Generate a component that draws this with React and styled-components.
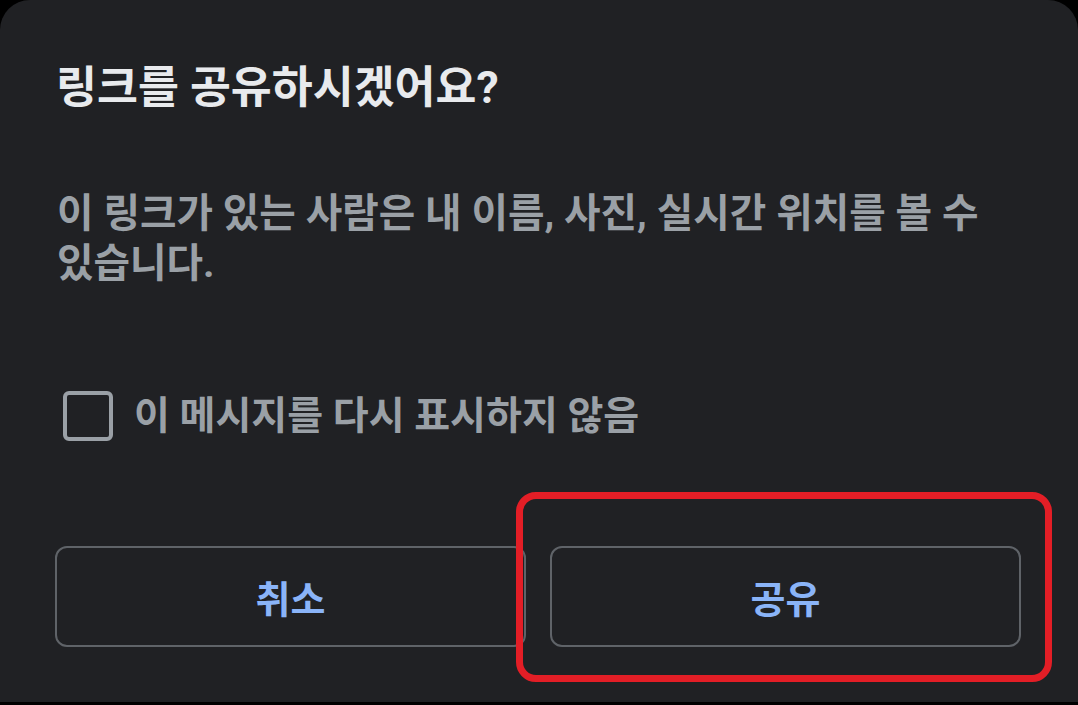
import React, { useState } from 'react';
import styled, { createGlobalStyle } from 'styled-components';

const GlobalStyle = createGlobalStyle`
  html, body {
    margin: 0;
    padding: 0;
    background: #000;
  }
  body {
    font-family: Roboto, "Noto Sans CJK KR", sans-serif;
  }
`;

const Screen = styled.div`
  width: 1078px;
  height: 705px;
  background: #000;
  overflow: hidden;
`;

const Dialog = styled.div`
  box-sizing: border-box;
  width: 1078px;
  height: 702px;
  padding: 60px 56px 0 56px;
  background: #202124;
  border-radius: 30px 30px 0 0;
  display: flex;
  flex-direction: column;
`;

const Title = styled.h2`
  margin: 0;
  font-size: 44.5px;
  line-height: 56px;
  font-weight: 700;
  color: #e8eaed;
`;

const Message = styled.p`
  margin: 73px 0 0 1px;
  font-size: 39.7px;
  line-height: 50px;
  font-weight: 700;
  color: #9aa0a6;
`;

const CheckRow = styled.label`
  margin-top: 102px;
  display: flex;
  align-items: center;
  gap: 21px;
  padding-left: 7px;
  cursor: pointer;
`;

const Box = styled.span`
  box-sizing: border-box;
  width: 50px;
  height: 50px;
  border: 4.5px solid #9aa0a6;
  border-radius: 6px;
  background: ${props => (props.checked ? '#9aa0a6' : 'transparent')};
`;

const CheckText = styled.span`
  font-size: 39px;
  line-height: 50px;
  font-weight: 700;
  color: #9aa0a6;
`;

const Actions = styled.div`
  margin-top: 105px;
  display: grid;
  grid-template-columns: 1fr 1fr;
  gap: 24px;
  padding: 0 1px 0 0;
  margin-left: -1px;
`;

const ButtonWrap = styled.div`
  position: relative;
`;

const Button = styled.button`
  box-sizing: border-box;
  width: 100%;
  height: 101px;
  background: transparent;
  border: 2.5px solid #5f6368;
  border-radius: 12px;
  font-family: Roboto, "Noto Sans CJK KR", sans-serif;
  font-size: 38px;
  font-weight: 700;
  color: #8ab4f8;
  cursor: pointer;
`;

const Highlight = styled.span`
  position: absolute;
  top: -54px;
  left: -34px;
  right: -31px;
  bottom: -35px;
  border: 7px solid #e31e26;
  border-radius: 20px;
  pointer-events: none;
`;

export default function App() {
  const [checked, setChecked] = useState(false);

  return (
    <Screen>
      <GlobalStyle />
      <Dialog>
        <Title>링크를 공유하시겠어요?</Title>
        <Message>
          이 링크가 있는 사람은 내 이름, 사진, 실시간 위치를 볼 수 있습니다.
        </Message>
        <CheckRow onClick={() => setChecked(!checked)}>
          <Box checked={checked} />
          <CheckText>이 메시지를 다시 표시하지 않음</CheckText>
        </CheckRow>
        <Actions>
          <ButtonWrap>
            <Button>취소</Button>
          </ButtonWrap>
          <ButtonWrap>
            <Button>공유</Button>
            <Highlight />
          </ButtonWrap>
        </Actions>
      </Dialog>
    </Screen>
  );
}
